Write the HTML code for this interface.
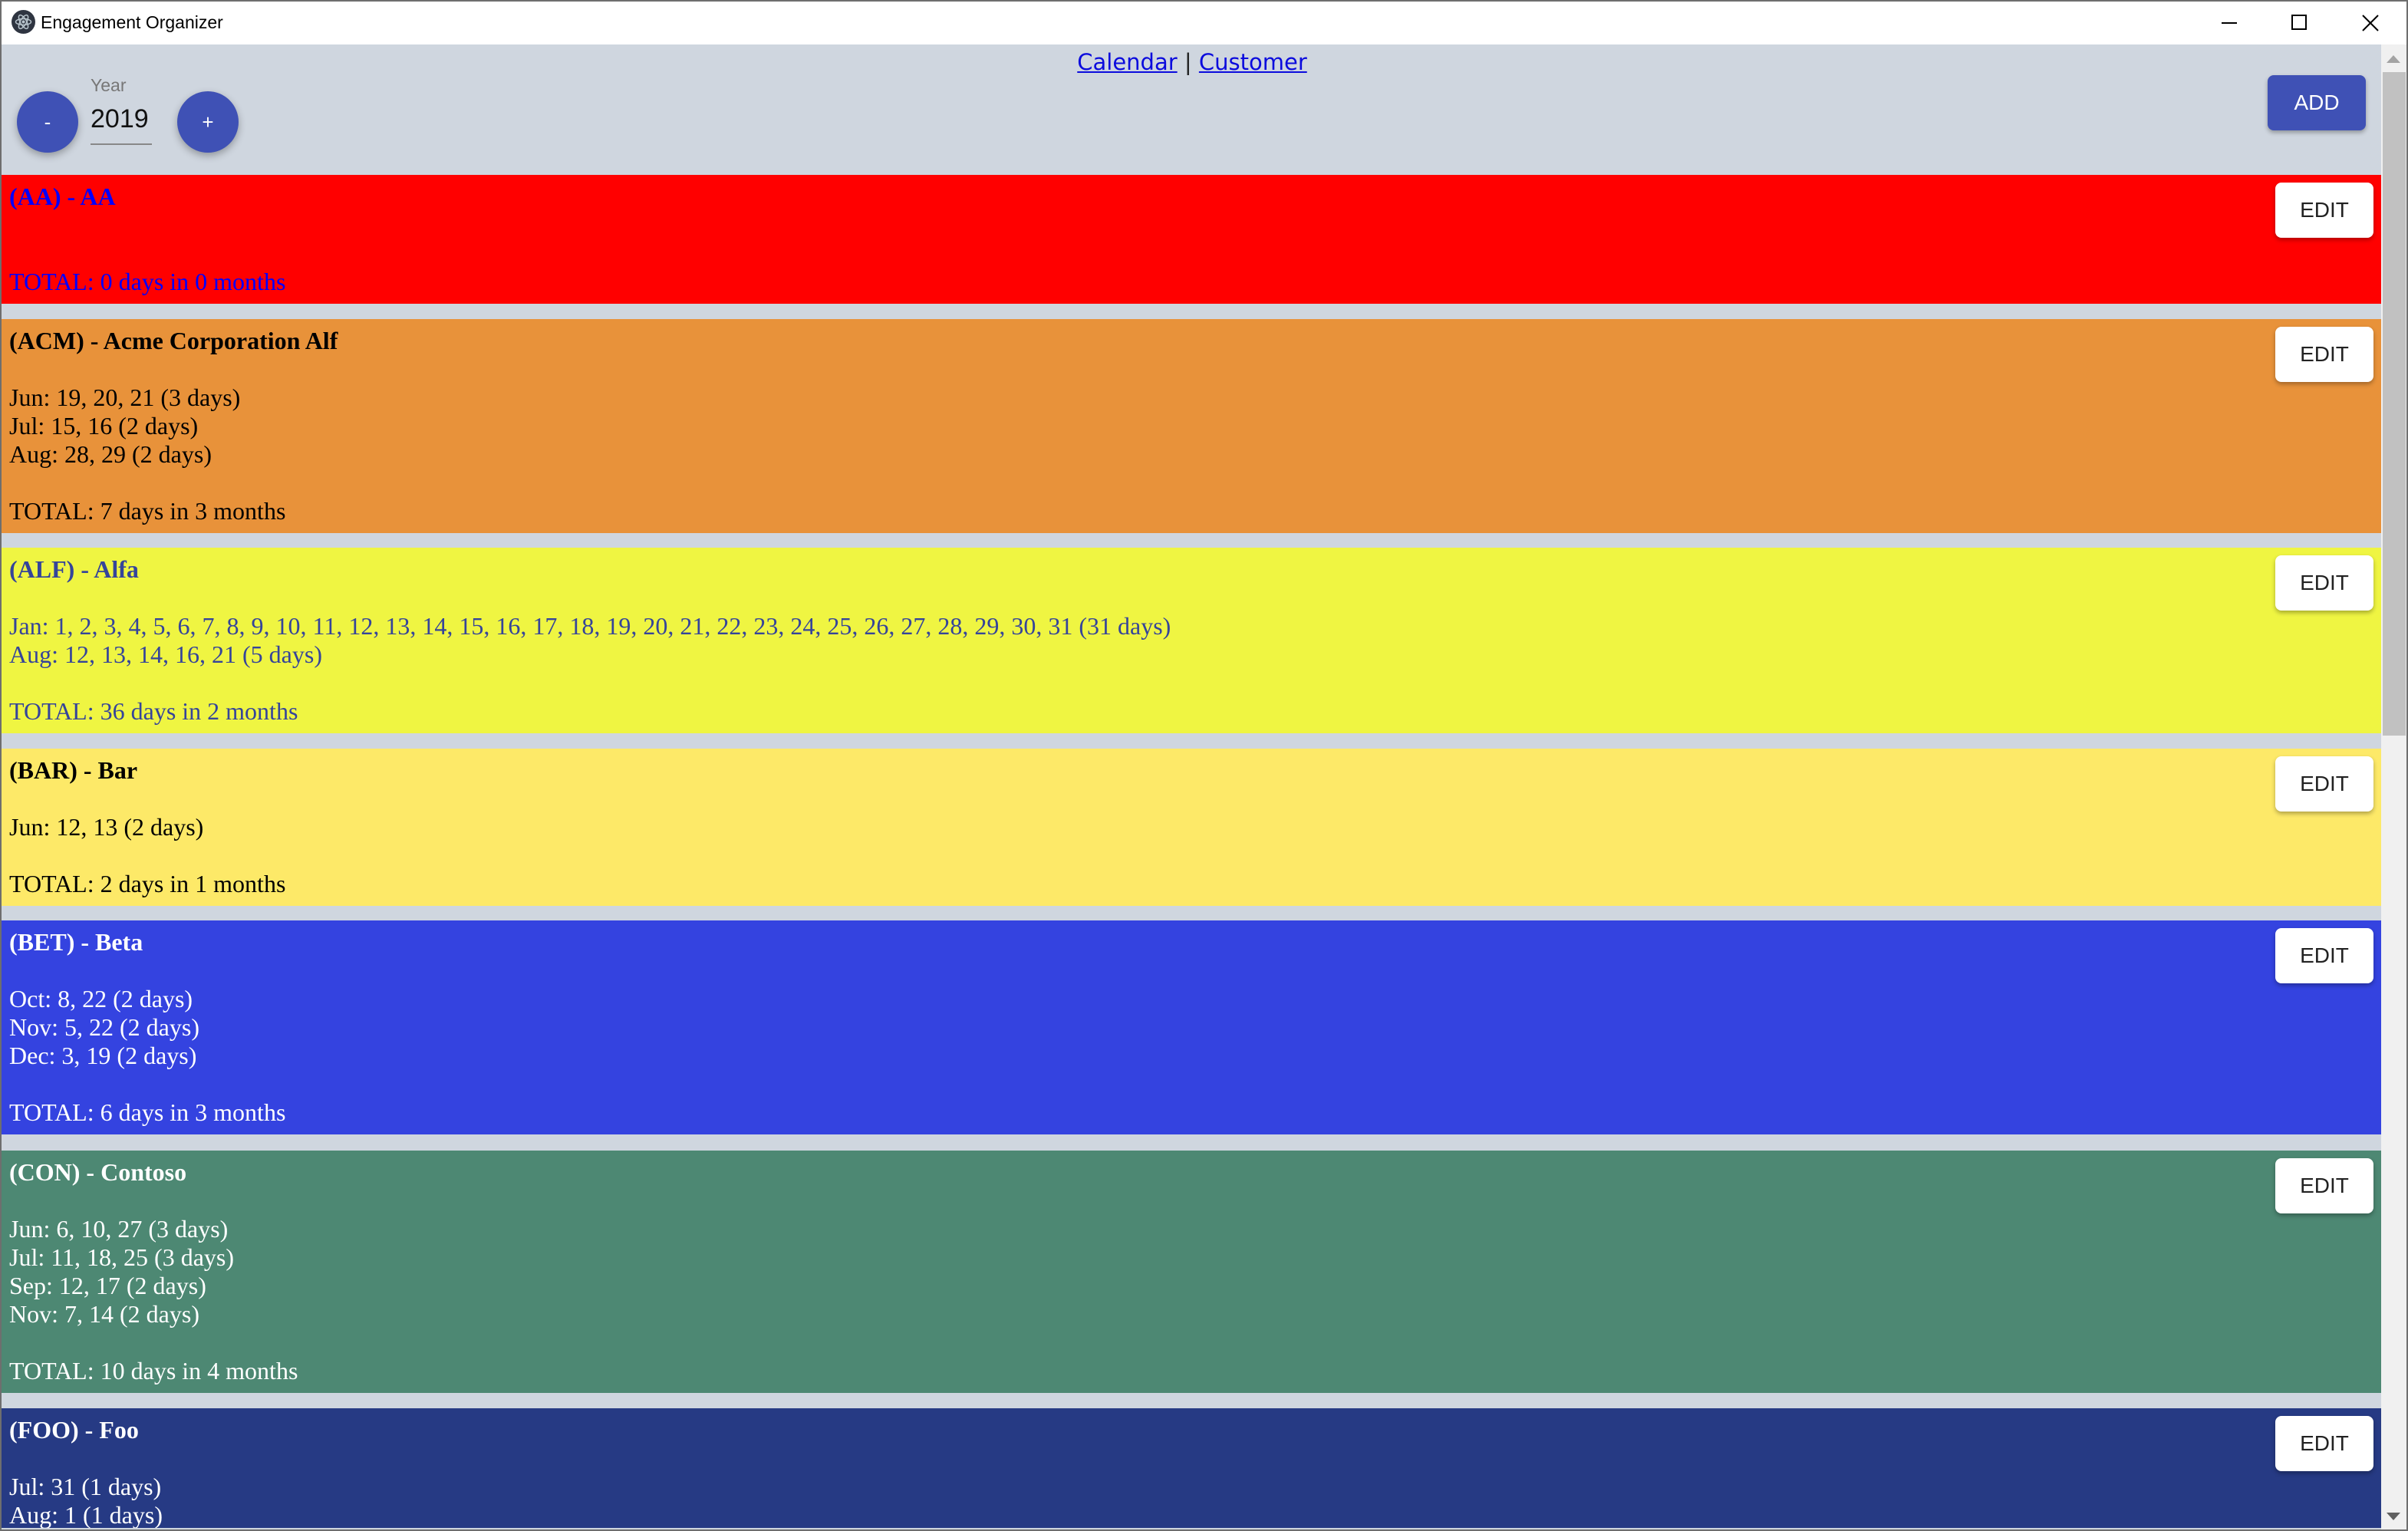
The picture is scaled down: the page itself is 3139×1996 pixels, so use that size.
<!DOCTYPE html>
<html><head><meta charset="utf-8"><style>
*{margin:0;padding:0;box-sizing:border-box}
html,body{width:3139px;height:1996px;overflow:hidden;background:#6e6e6e}
.win{position:absolute;left:2px;top:2px;width:3135px;height:1992px;background:#cfd6df;overflow:hidden}
.title{position:absolute;left:0;top:0;width:3135px;height:56px;background:#fff}
.title .t{position:absolute;left:51px;top:14px;font:23px "Liberation Sans",sans-serif;color:#000}
.ico{position:absolute;left:13px;top:11px;width:31px;height:31px;border-radius:50%;background:#2f3541}
.ctl{position:absolute;background:#000}
.nav{position:absolute;left:0;width:3104px;top:62px;text-align:center;font:29px "DejaVu Sans","Liberation Sans",sans-serif;color:#222}
.nav a{color:#0b0bdd;text-decoration:underline}
.circ{position:absolute;width:80px;height:80px;border-radius:50%;background:#3f51b5;color:#fff;font:26px "Liberation Sans",sans-serif;text-align:center;line-height:80px;box-shadow:0 4px 10px rgba(0,0,0,.3)}
.year{position:absolute;left:116px;top:96px;font:23px "Liberation Sans",sans-serif;color:#777}
.yv{position:absolute;left:116px;top:134px;font:34px "Liberation Sans",sans-serif;color:#111}
.ul{position:absolute;left:116px;top:185px;width:80px;height:2px;background:#888}
.add{position:absolute;left:2954px;top:96px;width:128px;height:72px;border-radius:8px;background:#3f51b5;color:#fff;font:28px "Liberation Sans",sans-serif;text-align:center;line-height:72px;box-shadow:0 3px 6px rgba(0,0,0,.3)}
.band{position:absolute;left:0;width:3102px;padding:10px 10px;font:32px/37px "Liberation Serif",serif;overflow:hidden}
.band b{font-weight:bold}
.edit{position:absolute;left:2964px;width:128px;height:72px;border-radius:8px;background:#fff;color:#222;font:28px "Liberation Sans",sans-serif;text-align:center;line-height:72px;box-shadow:0 3px 6px rgba(0,0,0,.3)}
.sb{position:absolute;left:3102px;top:56px;width:33px;height:1936px;background:#f0f0f0}
.thumb{position:absolute;left:2px;top:36px;width:30px;height:865px;background:#c1c1c1}
</style></head><body>
<div class="win">
<div class="title">
 <div class="ico"><svg width="31" height="31" viewBox="0 0 31 31"><g fill="none" stroke="#b8c4cc" stroke-width="1.5"><ellipse cx="15.5" cy="15.5" rx="10" ry="4" transform="rotate(60 15.5 15.5)"/><ellipse cx="15.5" cy="15.5" rx="10" ry="4" transform="rotate(-60 15.5 15.5)"/><ellipse cx="15.5" cy="15.5" rx="10" ry="4"/></g><circle cx="15.5" cy="15.5" r="2" fill="#b8c4cc"/></svg></div>
 <div class="t">Engagement Organizer</div>
 <div class="ctl" style="left:2894px;top:27px;width:20px;height:2px"></div>
 <div style="position:absolute;left:2985px;top:17px;width:20px;height:20px;border:2px solid #000"></div>
 <svg style="position:absolute;left:3077px;top:17px" width="22" height="22"><path d="M1 1L21 21M21 1L1 21" stroke="#000" stroke-width="2"/></svg>
</div>
<div class="nav"><a>Calendar</a> | <a>Customer</a></div>
<div class="circ" style="left:20px;top:117px">-</div>
<div class="year">Year</div>
<div class="yv">2019</div>
<div class="ul"></div>
<div class="circ" style="left:229px;top:117px">+</div>
<div class="add">ADD</div>

<div class="band" style="top:226px;height:168px;background:#ff0000;color:#0000ff"><b>(AA) - AA</b><br><br><br>TOTAL: 0 days in 0 months</div>
<div class="edit" style="top:236px">EDIT</div>

<div class="band" style="top:414px;height:279px;background:#e8923a;color:#000"><b>(ACM) - Acme Corporation Alf</b><br><br>Jun: 19, 20, 21 (3 days)<br>Jul: 15, 16 (2 days)<br>Aug: 28, 29 (2 days)<br><br>TOTAL: 7 days in 3 months</div>
<div class="edit" style="top:424px">EDIT</div>

<div class="band" style="top:712px;height:242px;background:#eff542;color:#35449a"><b>(ALF) - Alfa</b><br><br>Jan: 1, 2, 3, 4, 5, 6, 7, 8, 9, 10, 11, 12, 13, 14, 15, 16, 17, 18, 19, 20, 21, 22, 23, 24, 25, 26, 27, 28, 29, 30, 31 (31 days)<br>Aug: 12, 13, 14, 16, 21 (5 days)<br><br>TOTAL: 36 days in 2 months</div>
<div class="edit" style="top:722px">EDIT</div>

<div class="band" style="top:974px;height:205px;background:#fde968;color:#000"><b>(BAR) - Bar</b><br><br>Jun: 12, 13 (2 days)<br><br>TOTAL: 2 days in 1 months</div>
<div class="edit" style="top:984px">EDIT</div>

<div class="band" style="top:1198px;height:279px;background:#3443e0;color:#fff"><b>(BET) - Beta</b><br><br>Oct: 8, 22 (2 days)<br>Nov: 5, 22 (2 days)<br>Dec: 3, 19 (2 days)<br><br>TOTAL: 6 days in 3 months</div>
<div class="edit" style="top:1208px">EDIT</div>

<div class="band" style="top:1498px;height:316px;background:#4d8873;color:#fff"><b>(CON) - Contoso</b><br><br>Jun: 6, 10, 27 (3 days)<br>Jul: 11, 18, 25 (3 days)<br>Sep: 12, 17 (2 days)<br>Nov: 7, 14 (2 days)<br><br>TOTAL: 10 days in 4 months</div>
<div class="edit" style="top:1508px">EDIT</div>

<div class="band" style="top:1834px;height:156px;background:#263a84;color:#fff"><b>(FOO) - Foo</b><br><br>Jul: 31 (1 days)<br>Aug: 1 (1 days)</div>
<div class="edit" style="top:1844px">EDIT</div>

<div class="sb">
 <svg style="position:absolute;left:7px;top:14px" width="18" height="10"><path d="M0 10L9 0L18 10Z" fill="#a3a3a3"/></svg>
 <div class="thumb"></div>
 <svg style="position:absolute;left:7px;top:1914px" width="18" height="10"><path d="M0 0L18 0L9 10Z" fill="#606060"/></svg>
</div>
</div>
</body></html>
